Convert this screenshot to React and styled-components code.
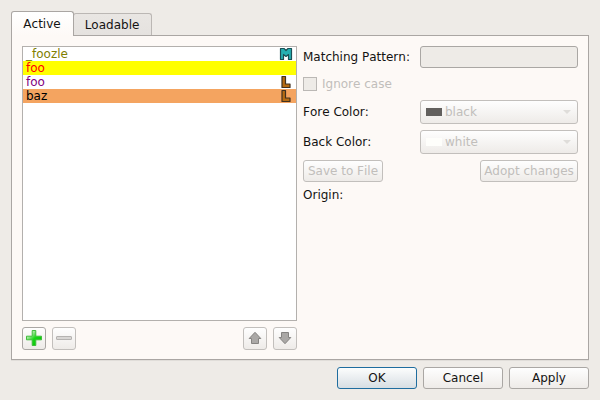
import React from "react";
import styled, { createGlobalStyle } from "styled-components";

const GlobalStyle = createGlobalStyle`
  * { box-sizing: border-box; }
  body {
    margin: 0;
    background: #eeebe7;
    color: #141312;
    font: 12px/14px "DejaVu Sans", sans-serif;
    font-kerning: none;
  }
`;

const Dialog = styled.main`
  width: 600px;
  height: 400px;
  padding: 11px;
  display: flex;
  flex-direction: column;
  overflow: hidden;
`;

const TabBar = styled.nav`
  display: flex;
  align-items: flex-end;
  height: 24px;
`;

const Tab = styled.button`
  font: inherit;
  font-kerning: none;
  color: inherit;
  z-index: ${(p) => (p.$active ? 1 : 0)};
  width: ${(p) => (p.$active ? 63 : 79)}px;
  height: ${(p) => (p.$active ? 25 : 22)}px;
  margin: ${(p) => (p.$active ? "0 0 -1px" : "0 0 0 -1px")};
  padding: 0 1px 0 0;
  border: 1px solid ${(p) => (p.$active ? "#aaa6a3" : "#bbb7b4")};
  border-bottom: 0;
  border-radius: 3px 3px 0 0;
  background: ${(p) =>
    p.$active
      ? "linear-gradient(#ffffff, #fdf9f6)"
      : "linear-gradient(#e9e6e3, #e5e2df)"};
`;

const Panel = styled.section`
  height: 325px;
  padding: 10px;
  display: flex;
  gap: 6px;
  border: 1px solid #aaa6a3;
  background: #fdf9f6;
  box-shadow: 0 1px 0 #e0ddd9;
`;

const ListColumn = styled.div`
  width: 275px;
  display: flex;
  flex-direction: column;
  gap: 6px;
`;

const List = styled.ul`
  flex: none;
  height: 275px;
  margin: 0;
  padding: 0;
  list-style: none;
  border: 1px solid #b3b0ad;
  background: #ffffff;
`;

const ListRow = styled.li`
  height: 14px;
  padding: 0 3px;
  display: flex;
  justify-content: space-between;
  color: ${(p) => p.$fore};
  background: ${(p) => p.$back};
`;

const Toolbar = styled.div`
  flex: none;
  display: flex;
  gap: 6px;
`;

const Spacer = styled.span`
  flex: 1;
`;

const Button = styled.button`
  font: inherit;
  font-kerning: none;
  width: ${(p) => p.$width}px;
  height: 22px;
  padding: 0;
  display: flex;
  align-items: center;
  justify-content: center;
  white-space: nowrap;
  color: ${(p) => (p.disabled ? "#c1bebb" : "#141312")};
  border: 1px solid
    ${(p) => (p.$primary ? "#1f6d9f" : p.disabled ? "#c2bfbc" : "#aaa7a4")};
  border-radius: 3px;
  background: ${(p) =>
    p.$primary
      ? "linear-gradient(#fcfdfd, #d7dee3)"
      : "linear-gradient(#fefefe, #eeebe8)"};
`;

const ToolButton = styled(Button)`
  width: 24px;
  height: 23px;
  padding-bottom: 1px;
`;

const Form = styled.div`
  width: 275px;
  display: flex;
  flex-direction: column;
  gap: 6px;
`;

const FormRow = styled.div`
  height: ${(p) => p.$height}px;
  display: flex;
  align-items: center;
  justify-content: space-between;
`;

const PatternInput = styled.input`
  font: inherit;
  width: 158px;
  height: 22px;
  padding: 0 4px;
  border: 1px solid #aaa7a4;
  border-radius: 3px;
  background: #eeebe7;
`;

const CheckLabel = styled.div`
  height: 20px;
  display: flex;
  align-items: center;
  gap: 5px;
  color: #c1bebb;
`;

const CheckBox = styled.span`
  width: 14px;
  height: 14px;
  border: 1px solid #bbb8b5;
  background: #eeebe7;
`;

const Combo = styled.div`
  width: 158px;
  height: 24px;
  padding: 0 6px 0 5px;
  display: flex;
  align-items: center;
  gap: 3px;
  color: #c1bebb;
  border: 1px solid #c2bfbc;
  border-radius: 3px;
  background: linear-gradient(#fefefe, #eeebe8);
`;

const Swatch = styled.span`
  width: 16px;
  height: 8px;
  background: ${(p) => p.$color};
`;

const DialogButtons = styled.footer`
  margin-top: 7px;
  display: flex;
  justify-content: flex-end;
  gap: 6px;
`;

const IconSvg = styled.svg`
  display: block;
  flex: none;
`;

const ModifiedIcon = () => (
  <IconSvg width="14" height="14" viewBox="0 0 14 14">
    <path
      d="M1.500 1.500h3.500l2 2 2-2h3.500v11H9.500V7.500L7 9.500 4.500 7.500v5h-3z"
      fill="#25b0b2"
      stroke="#1c5055"
      strokeWidth="1.200"
      strokeLinejoin="round"
    />
  </IconSvg>
);

const LocalIcon = () => (
  <IconSvg width="14" height="14" viewBox="0 0 14 14">
    <path
      d="M3 1.500h3.500v7.500h4.500v3.500H3z"
      fill="#b56a12"
      stroke="#40301f"
      strokeWidth="1.200"
      strokeLinejoin="round"
    />
  </IconSvg>
);

const PlusIcon = () => (
  <IconSvg width="16" height="16" viewBox="0 0 16 16">
    <defs>
      <linearGradient id="plus" x1="0" y1="0" x2="1" y2="1">
        <stop offset=".25" stopColor="#b0eaa8" />
        <stop offset=".52" stopColor="#19d619" />
        <stop offset="1" stopColor="#00c000" />
      </linearGradient>
    </defs>
    <path
      d="M6.200 .5h3.600v5.700h5.700v3.600h-5.700v5.700h-3.600v-5.700H.5v-3.600h5.700z"
      fill="url(#plus)"
      stroke="#3fbd3a"
      strokeLinejoin="round"
    />
  </IconSvg>
);

const MinusIcon = () => (
  <IconSvg width="16" height="16" viewBox="0 0 16 16">
    <rect x=".5" y="6.500" width="15" height="3" rx=".5" fill="#d8d6d4" stroke="#b5b3b1" />
  </IconSvg>
);

const ArrowIcon = ({ down }) => (
  <IconSvg width="14" height="14" viewBox="0 0 14 14">
    <path
      d={
        down
          ? "M3.500 1.500h7v5h2.300L7 12.700 1.200 6.500h2.300z"
          : "M7 1.300l5.800 6.200h-2.300v5h-7v-5H1.200z"
      }
      fill="#aaa8a6"
      stroke="#858381"
      strokeLinejoin="round"
    />
  </IconSvg>
);

const DropArrow = () => (
  <IconSvg width="8" height="4" viewBox="0 0 8 4">
    <path d="M0 0h8L4 4z" fill="#dfddda" />
  </IconSvg>
);

const patterns = [
  { text: "_foozle", fore: "#808000", back: "#ffffff", Icon: ModifiedIcon },
  { text: "foo", fore: "#ff0000", back: "#ffff00" },
  { text: "foo", fore: "#800080", back: "#ffffff", Icon: LocalIcon },
  { text: "baz", fore: "#000000", back: "#f4a460", Icon: LocalIcon },
];

const ColorRow = ({ label, name, color }) => (
  <FormRow $height={24}>
    <span>{label}</span>
    <Combo>
      <Swatch $color={color} />
      <span>{name}</span>
      <Spacer />
      <DropArrow />
    </Combo>
  </FormRow>
);

export default function App() {
  return (
    <>
      <GlobalStyle />
      <Dialog>
        <TabBar>
          <Tab $active>Active</Tab>
          <Tab>Loadable</Tab>
        </TabBar>
        <Panel>
          <ListColumn>
            <List>
              {patterns.map(({ text, fore, back, Icon }, i) => (
                <ListRow key={i} $fore={fore} $back={back}>
                  <span>{text}</span>
                  {Icon && <Icon />}
                </ListRow>
              ))}
            </List>
            <Toolbar>
              <ToolButton aria-label="Add"><PlusIcon /></ToolButton>
              <ToolButton disabled aria-label="Remove"><MinusIcon /></ToolButton>
              <Spacer />
              <ToolButton disabled aria-label="Move up"><ArrowIcon /></ToolButton>
              <ToolButton disabled aria-label="Move down"><ArrowIcon down /></ToolButton>
            </Toolbar>
          </ListColumn>
          <Form>
            <FormRow $height={22}>
              <span>Matching Pattern:</span>
              <PatternInput disabled />
            </FormRow>
            <CheckLabel>
              <CheckBox />
              <span>Ignore case</span>
            </CheckLabel>
            <ColorRow label="Fore Color:" name="black" color="#62605e" />
            <ColorRow label="Back Color:" name="white" color="#fefefb" />
            <FormRow $height={22}>
              <Button $width={80} disabled>Save to File</Button>
              <Button $width={98} disabled>Adopt changes</Button>
            </FormRow>
            <span>Origin:</span>
          </Form>
        </Panel>
        <DialogButtons>
          <Button $width={80} $primary>OK</Button>
          <Button $width={80}>Cancel</Button>
          <Button $width={80}>Apply</Button>
        </DialogButtons>
      </Dialog>
    </>
  );
}
